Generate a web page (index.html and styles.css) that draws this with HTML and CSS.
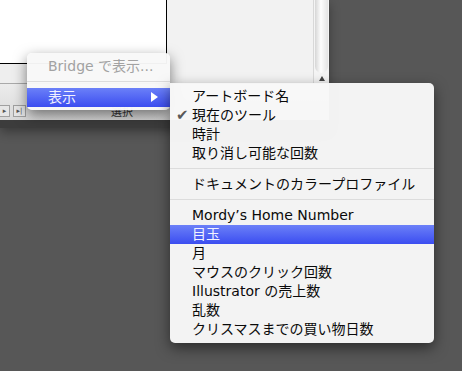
FILE: index.html
```html
<!DOCTYPE html>
<html lang="ja">
<head>
    <meta charset="UTF-8">
    <title>表示メニュー</title>
    <link rel="stylesheet" href="styles.css">
</head>
<body>

<div class="window">
    <div class="doc-area">
        <div class="doc-left">
            <div class="canvas"></div>
        </div>
        <div class="panel"></div>
        <div class="scrollbar">
            <div class="thumb"></div>
            <div class="scroll-arrow"></div>
        </div>
    </div>
    <div class="status">
        <div class="status-row">
            <span class="nav-btn first">&#9656;</span>
            <span class="nav-btn">&#9656;|</span>
            <span class="status-label">選択</span>
        </div>
    </div>
</div>

<!-- context menu -->
<div class="menu context-menu">
    <div class="item disabled">Bridge で表示...</div>
    <div class="separator"></div>
    <div class="item selected">表示<span class="arrow"></span></div>
</div>

<!-- submenu -->
<div class="menu submenu">
    <div class="item">アートボード名</div>
    <div class="item checked">現在のツール</div>
    <div class="item">時計</div>
    <div class="item">取り消し可能な回数</div>
    <div class="separator"></div>
    <div class="item">ドキュメントのカラープロファイル</div>
    <div class="separator"></div>
    <div class="item">Mordy’s Home Number</div>
    <div class="item selected">目玉</div>
    <div class="item">月</div>
    <div class="item">マウスのクリック回数</div>
    <div class="item">Illustrator の売上数</div>
    <div class="item">乱数</div>
    <div class="item">クリスマスまでの買い物日数</div>
</div>

</body>
</html>
```

FILE: styles.css
```css
body {
    margin: 0;
    width: 462px;
    height: 371px;
    overflow: hidden;
    position: relative;
    background-color: #575757;
    font-family: "DejaVu Sans", "Noto Sans CJK JP", sans-serif;
}

/* window behind the menus */
.window {
    width: 329px;
    border-bottom: 8px solid #3c3c3c;
    box-shadow: 0 4px 10px rgba(0, 0, 0, 0.35);
}

.doc-area {
    display: flex;
    height: 83px;
}

.doc-left {
    width: 167px;
    background-color: #eeeeee;
}

.canvas {
    box-sizing: border-box;
    height: 64px;
    background-color: #fff;
    border-right: 1px solid #000;
    border-bottom: 1px solid #000;
}

.panel {
    flex: 1;
    background-color: #f2f2f2;
}

.scrollbar {
    width: 15px;
    background-color: #f4f4f4;
    border-left: 1px solid #d8d8d8;
    display: flex;
    flex-direction: column;
    align-items: center;
}

.thumb {
    width: 13px;
    height: 73px;
    border-radius: 0 0 7px 7px;
    background: linear-gradient(to right, #d6d6d6, #fdfdfd 45%, #e4e4e4);
}

.scroll-arrow {
    margin-top: 3px;
    width: 0;
    height: 0;
    border-left: 3px solid transparent;
    border-right: 3px solid transparent;
    border-bottom: 5px solid #444;
}

.status {
    height: 36px;
    border-top: 1px solid #a9a9a9;
    background: linear-gradient(#ececec, #d9d9d9);
    display: flex;
    flex-direction: column;
    justify-content: flex-end;
}

.status-row {
    display: flex;
    align-items: center;
    height: 14px;
    margin-bottom: 2px;
    font-size: 11px;
    color: #333;
}

.nav-btn {
    box-sizing: border-box;
    height: 12px;
    width: 13px;
    margin-right: 3px;
    border: 1px solid #a0a0a0;
    background-color: #e6e6e6;
    font-size: 7px;
    line-height: 10px;
    text-align: center;
    color: #555;
}

.nav-btn.first {
    width: 10px;
    border-left: none;
}

.status-label {
    margin-left: 82px;
    font-family: "Noto Sans CJK JP", sans-serif;
}

/* menus */
.menu {
    position: absolute;
    background-color: rgba(248, 248, 248, 0.97);
    box-shadow: 0 5px 14px rgba(0, 0, 0, 0.5);
    border-radius: 5px;
    font-size: 14px;
    color: #0a0a0a;
}

.item {
    height: 19px;
    line-height: 19px;
    white-space: nowrap;
    position: relative;
}

.item.disabled {
    color: #a2a2a2;
}

.item.selected {
    background: linear-gradient(#6b80f8, #3b4df0);
    color: #f2f2ff;
}

.separator {
    height: 1px;
    background-color: #dcdcdc;
}

.context-menu {
    left: 27px;
    top: 53px;
    width: 143px;
    padding: 4px 0 3px;
}

.context-menu .item {
    padding-left: 21px;
}

.context-menu .separator {
    margin: 5px 0 6px;
}

.arrow {
    position: absolute;
    right: 12px;
    top: 4px;
    width: 0;
    height: 0;
    border-top: 5px solid transparent;
    border-bottom: 5px solid transparent;
    border-left: 7px solid #fff;
}

.submenu {
    left: 170px;
    top: 83px;
    width: 264px;
    padding: 4px 0;
    border-radius: 0 5px 5px 5px;
}

.submenu .item {
    padding-left: 22px;
}

.submenu .separator {
    margin: 5px 0 6px;
}

.item.checked::before {
    content: "✔";
    position: absolute;
    left: 6px;
    top: 0;
    font-size: 15px;
    color: #5a5a5a;
}
```
